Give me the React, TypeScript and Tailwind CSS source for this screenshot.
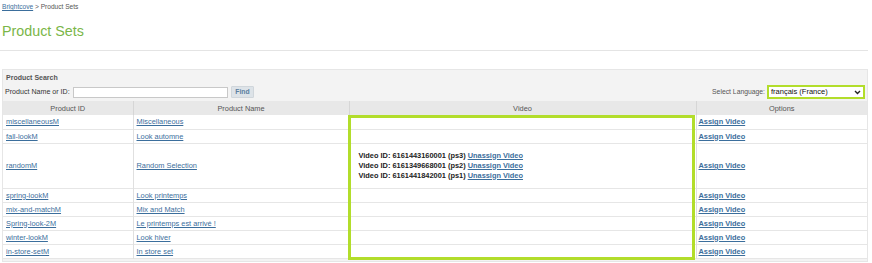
import React from 'react';

const rows = [
  { id: 'miscellaneousM', name: 'Miscellaneous' },
  { id: 'fall-lookM', name: 'Look automne' },
  {
    id: 'randomM',
    name: 'Random Selection',
    videos: [
      { vid: '6161443160001', ps: 'ps3' },
      { vid: '6161349668001', ps: 'ps2' },
      { vid: '6161441842001', ps: 'ps1' },
    ],
  },
  { id: 'spring-lookM', name: 'Look printemps' },
  { id: 'mix-and-matchM', name: 'Mix and Match' },
  { id: 'Spring-look-2M', name: 'Le printemps est arrivé !' },
  { id: 'winter-lookM', name: 'Look hiver' },
  { id: 'in-store-setM', name: 'In store set' },
];

const link = 'text-[#3b6e9c] underline';

const App = () => {
  return (
    <div className="w-[872px] h-[263px] bg-white overflow-hidden font-['Liberation_Sans',Arial,sans-serif] text-[#333]">
      {/* Breadcrumb */}
      <div className="pl-[2px] pt-[3px] h-[12px] text-[6.6px] leading-[8px] text-[#555]">
        <a className={link}>Brightcove</a> &gt; Product Sets
      </div>

      {/* Title */}
      <h1 className="pl-[2px] mt-[11px] text-[14.3px] leading-[16px] text-[#7ab648]">Product Sets</h1>

      <div className="mt-[11px] mr-[4px] h-px bg-[#e4e4e4]" />

      {/* Panel */}
      <div className="mt-[18px] ml-[2px] mr-[4px] bg-[#f3f3f3] border border-[#e6e6e6] pb-[2px]">
        <div className="pl-[3px] pt-[3px] h-[14px] text-[7px] leading-[10px] font-bold text-[#555]">
          Product Search
        </div>
        <div className="flex items-center h-[16px] pl-[2px] pr-[2px] text-[7.1px] text-[#333]">
          <span className="w-[68px] whitespace-nowrap">Product Name or ID:</span>
          <div className="w-[155px] h-[11px] bg-white border border-[#c8c8c8]" />
          <div className="ml-[3px] w-[23px] h-[12px] bg-[#dde3e8] border border-[#d0d6db] rounded-[1px] flex items-center justify-center text-[#5a7fa0] font-bold text-[6.8px]">
            Find
          </div>
          <div className="ml-auto flex items-center">
            <span className="text-[#555] text-[6.8px]">Select Language:</span>
            <div className="ml-[2px] w-[98px] h-[14px] bg-white border-[2px] border-[#b2dd2b] flex items-center justify-between px-[2px] text-[7.5px] text-[#111]">
              <span>français (France)</span>
              <svg width="7" height="5" viewBox="0 0 7 5">
                <path d="M1 1 L3.5 3.5 L6 1" stroke="#222" strokeWidth="1.4" fill="none" />
              </svg>
            </div>
          </div>
        </div>

        <div className="relative mt-[1px]">
          <table className="w-full border-collapse text-[7.4px] leading-[9px]">
            <colgroup>
              <col className="w-[130px]" />
              <col className="w-[216px]" />
              <col className="w-[347px]" />
              <col />
            </colgroup>
            <thead>
              <tr className="h-[14px] bg-[#e8e8e8] text-[#555]">
                <th className="font-normal border-r border-[#d6d6d6]">Product ID</th>
                <th className="font-normal border-r border-[#d6d6d6]">Product Name</th>
                <th className="font-normal border-r border-[#d6d6d6]">Video</th>
                <th className="font-normal">Options</th>
              </tr>
            </thead>
            <tbody className="bg-white">
              {rows.map((r) => (
                <tr key={r.id} className={`${r.videos ? 'h-[45px]' : 'h-[14px]'} border-b border-[#e6e6e6]`}>
                  <td className="pl-[3px] border-r border-[#e0e0e0]">
                    <a className={link}>{r.id}</a>
                  </td>
                  <td className="pl-[3px] border-r border-[#e0e0e0]">
                    <a className={link}>{r.name}</a>
                  </td>
                  <td className="pl-[9px] border-r border-[#e0e0e0] font-bold text-[#222]">
                    {r.videos &&
                      r.videos.map((v) => (
                        <div key={v.vid} className="leading-[10px]">
                          Video ID: {v.vid} ({v.ps}) <a className={link}>Unassign Video</a>
                        </div>
                      ))}
                  </td>
                  <td className="pl-[2px] font-bold">
                    <a className={link}>Assign Video</a>
                  </td>
                </tr>
              ))}
            </tbody>
          </table>
          {/* highlight around video column */}
          <div className="absolute left-[345px] top-[14px] w-[347px] bottom-[-1px] border-[3px] border-[#b2dd2b] pointer-events-none" />
        </div>
      </div>
    </div>
  );
};

export default App;
